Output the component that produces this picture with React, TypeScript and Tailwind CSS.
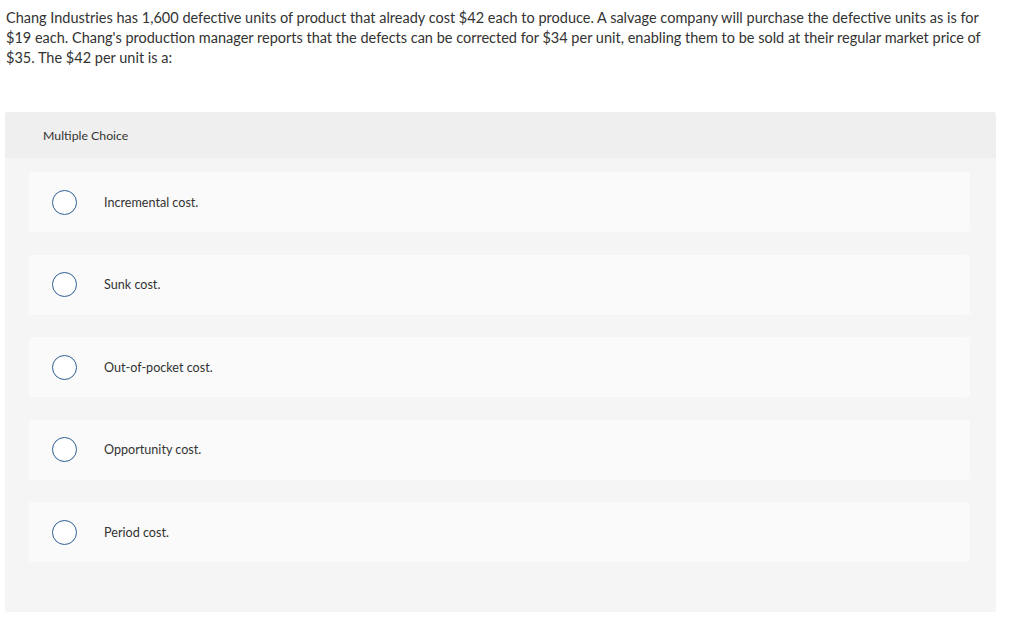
import React from "react";

const options = [
  "Incremental cost.",
  "Sunk cost.",
  "Out-of-pocket cost.",
  "Opportunity cost.",
  "Period cost.",
];

export default function App() {
  return (
    <div
      className="w-[1024px] h-[622px] bg-white text-[#333333] overflow-hidden"
      style={{ fontFamily: "Lato, 'Open Sans', Arial, sans-serif" }}
    >
      <p className="pl-[6px] pt-[8px] text-[14.5px] leading-[20px] whitespace-nowrap">
        Chang Industries has 1,600 defective units of product that already cost $42 each to produce. A salvage
        company will purchase the defective units as is for
        <br />
        $19 each. Chang's production manager reports that the defects can be corrected for $34 per unit, enabling
        them to be sold at their regular market price of
        <br />
        $35. The $42 per unit is a:
      </p>
      <div className="ml-[5px] mt-[44px] w-[991px] h-[500px] bg-[#f5f5f5] rounded-[3px] overflow-hidden">
        <div className="h-[46px] bg-[#efefef] flex items-center pl-[38px] pt-[2px] text-[12.3px]">Multiple Choice</div>
        <div className="flex flex-col gap-[22.5px] pt-[14px] pl-[24px] pr-[26px]">
          {options.map((o) => (
            <div key={o} className="h-[60px] bg-[#fafafa] rounded-[3px] flex items-center">
              <div className="ml-[23px] w-[25px] h-[25px] rounded-full border border-[#2d5e94] bg-white" />
              <span className="ml-[27px] pt-[2px] text-[12.6px]">{o}</span>
            </div>
          ))}
        </div>
      </div>
    </div>
  );
}
